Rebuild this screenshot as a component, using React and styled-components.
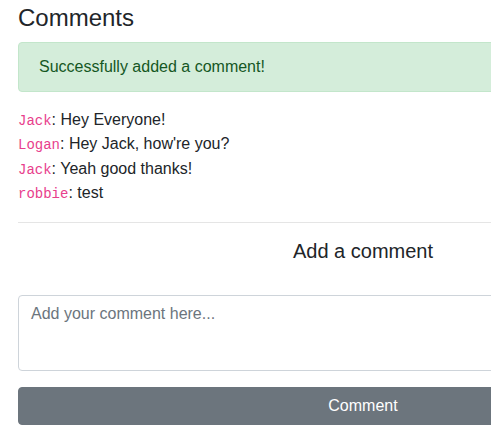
import React, { useState } from 'react'
import styled, { createGlobalStyle } from 'styled-components'

const GlobalStyle = createGlobalStyle`
  * { box-sizing: border-box; }
  body {
    margin: 0;
    font-family: "Liberation Sans", Arial, sans-serif;
    font-size: 16px;
    line-height: 1.5;
    color: #212529;
    background: #fff;
  }
`

const Container = styled.div`
  width: 690px;
  margin-left: 18px;
  padding-top: 4px;
`

const Title = styled.h3`
  margin: 0 0 9px 0;
  font-size: 24px;
  font-weight: 500;
  line-height: 1.2;
`

const Alert = styled.div`
  padding: 12px 20px;
  margin-bottom: 16px;
  border: 1px solid #c3e6cb;
  border-radius: 4px;
  background: #d4edda;
  color: #155724;
`

const CommentList = styled.div``

const CommentRow = styled.div`
  & + & {
    margin-top: 0.5px;
  }
`

const User = styled.code`
  font-family: "Liberation Mono", "Courier New", monospace;
  font-size: 14px;
  color: #e83e8c;
`

const Divider = styled.hr`
  margin: 17px 0 16px 0;
  border: 0;
  border-top: 1px solid rgba(0, 0, 0, 0.1);
`

const SubTitle = styled.h5`
  margin: 0 0 32px 0;
  font-size: 20px;
  font-weight: 500;
  line-height: 1.2;
  text-align: center;
`

const TextArea = styled.textarea`
  display: block;
  width: 100%;
  height: 76px;
  margin: 0 0 16px 0;
  padding: 6px 12px;
  font-family: inherit;
  font-size: 16px;
  line-height: 1.5;
  color: #495057;
  border: 1px solid #ced4da;
  border-radius: 4px;
  resize: vertical;
  outline: none;
  &::placeholder {
    color: #6c757d;
    opacity: 1;
  }
`

const Button = styled.button`
  display: block;
  width: 100%;
  height: 38px;
  padding: 6px 12px;
  font-family: inherit;
  font-size: 16px;
  line-height: 1.5;
  color: #fff;
  background: #6c757d;
  border: 1px solid #6c757d;
  border-radius: 4px;
  cursor: pointer;
`

const comments = [
  { user: 'Jack', text: 'Hey Everyone!' },
  { user: 'Logan', text: "Hey Jack, how're you?" },
  { user: 'Jack', text: 'Yeah good thanks!' },
  { user: 'robbie', text: 'test' }
]

function App () {
  const [text, setText] = useState('')

  return (
    <>
      <GlobalStyle />
      <Container>
        <Title>Comments</Title>
        <Alert>Successfully added a comment!</Alert>
        <CommentList>
          {comments.map((c, index) => (
            <CommentRow key={index}>
              <User>{c.user}</User>: {c.text}
            </CommentRow>
          ))}
        </CommentList>
        <Divider />
        <SubTitle>Add a comment</SubTitle>
        <TextArea
          placeholder='Add your comment here...'
          value={text}
          onChange={e => setText(e.target.value)}
        />
        <Button>Comment</Button>
      </Container>
    </>
  )
}

export default App
